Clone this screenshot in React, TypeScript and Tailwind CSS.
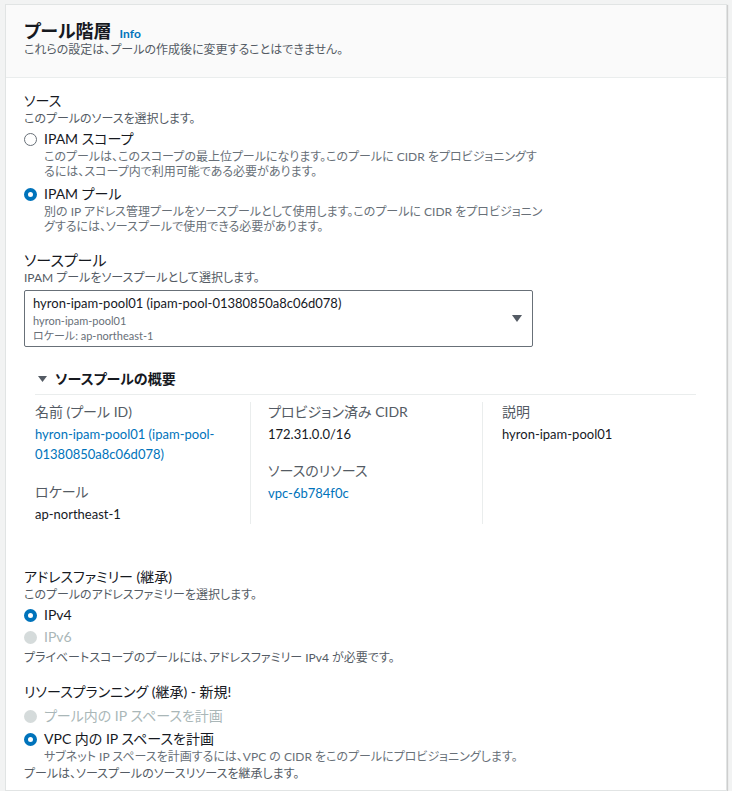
import React from 'react'

const font = { fontFamily: 'Lato, "Noto Sans CJK JP", sans-serif' }

function Radio({ state }: { state: 'on' | 'off' | 'disabled' }) {
  if (state === 'on') {
    return <span className="inline-block w-[13px] h-[13px] rounded-full border-[4px] border-[#0073bb] bg-white shrink-0" />
  }
  if (state === 'disabled') {
    return <span className="inline-block w-[13px] h-[13px] rounded-full bg-[#d5dbdb] shrink-0" />
  }
  return <span className="inline-block w-[13px] h-[13px] rounded-full border-[1.5px] border-[#687078] bg-white shrink-0" />
}

function RadioRow({ state, label }: { state: 'on' | 'off' | 'disabled'; label: string }) {
  return (
    <div className="flex items-center gap-[7px] h-[20px]">
      <Radio state={state} />
      <span className={`text-[14px] leading-[20px] ${state === 'disabled' ? 'text-[#aab7b8]' : 'text-[#16191f]'}`}>{label}</span>
    </div>
  )
}

export default function App() {
  return (
    <div className="h-screen overflow-hidden bg-[#f2f3f3] pl-[5px] pr-[5px] pt-[4px] [font-feature-settings:'palt']" style={font}>
      <div className="bg-white border border-[#e1e4e4] shadow-[1px_1px_1px_rgba(0,0,0,0.15)] h-full">
        {/* Header */}
        <div className="bg-[#fafafa] border-b border-[#eaeded] pl-[18px] pt-[15px] pb-[19px]">
          <div className="flex items-baseline gap-[8px] h-[22px]">
            <h2 className="text-[18px] leading-[22px] font-bold text-[#16191f]">プール階層</h2>
            <span className="text-[12px] font-bold text-[#0073bb]">Info</span>
          </div>
          <p className="text-[12px] leading-[16px] text-[#545b64]">これらの設定は、プールの作成後に変更することはできません。</p>
        </div>

        {/* Body */}
        <div className="pl-[18px] pt-[13px]">
          {/* Source */}
          <div className="text-[14px] leading-[20px] text-[#16191f]">ソース</div>
          <div className="text-[12px] leading-[16px] text-[#545b64]">このプールのソースを選択します。</div>
          <div className="mt-[2px]">
            <RadioRow state="off" label="IPAM スコープ" />
            <p className="ml-[20px] w-[520px] text-[12px] leading-[15px] text-[#687078]">
              このプールは、このスコープの最上位プールになります。このプールに CIDR をプロビジョニングす
              <br />
              るには、スコープ内で利用可能である必要があります。
            </p>
          </div>
          <div className="mt-[5px]">
            <RadioRow state="on" label="IPAM プール" />
            <p className="ml-[20px] w-[520px] text-[12px] leading-[15px] text-[#687078]">
              別の IP アドレス管理プールをソースプールとして使用します。このプールに CIDR をプロビジョニン
              <br />
              グするには、ソースプールで使用できる必要があります。
            </p>
          </div>

          {/* Source pool */}
          <div className="mt-[16px] text-[15px] leading-[20px] text-[#16191f]">ソースプール</div>
          <div className="text-[12px] leading-[16px] text-[#545b64]">IPAM プールをソースプールとして選択します。</div>
          <div className="mt-[4px] w-[509px] h-[57px] border border-[#687078] rounded-[2px] flex items-center pl-[8px] pr-[10px]">
            <div className="flex-1">
              <div className="text-[13px] leading-[19px] text-[#16191f]">hyron-ipam-pool01 (ipam-pool-01380850a8c06d078)</div>
              <div className="text-[11px] leading-[15px] text-[#687078]">hyron-ipam-pool01</div>
              <div className="text-[11px] leading-[15px] text-[#687078]">ロケール: ap-northeast-1</div>
            </div>
            <svg width="10" height="8" viewBox="0 0 10 8" className="shrink-0">
              <path d="M0 0 H10 L5 7 Z" fill="#545b64" />
            </svg>
          </div>

          {/* Summary */}
          <div className="ml-[11px] w-[661px] mt-[22px]">
            <div className="flex items-center gap-[8px] h-[20px] pl-[3px]">
              <svg width="9" height="7" viewBox="0 0 9 7">
                <path d="M0 0 H9 L4.5 6 Z" fill="#545b64" />
              </svg>
              <span className="text-[14px] leading-[20px] font-bold text-[#16191f]">ソースプールの概要</span>
            </div>
            <div className="mt-[5px] border-t border-[#eaeded] pt-[7px] flex">
              <div className="w-[216px] border-r border-[#eaeded] pr-[8px]">
                <div className="text-[14px] leading-[20px] text-[#545b64]">名前 (プール ID)</div>
                <div className="mt-[2px] text-[13px] leading-[20px] text-[#0073bb] whitespace-nowrap">
                  hyron-ipam-pool01 (ipam-pool-
                  <br />
                  01380850a8c06d078)
                </div>
                <div className="mt-[18px] text-[14px] leading-[20px] text-[#545b64]">ロケール</div>
                <div className="mt-[2px] text-[13px] leading-[20px] text-[#16191f]">ap-northeast-1</div>
              </div>
              <div className="w-[232px] border-r border-[#eaeded] pl-[17px]">
                <div className="text-[14px] leading-[20px] text-[#545b64]">プロビジョン済み CIDR</div>
                <div className="mt-[2px] text-[13px] leading-[20px] text-[#16191f]">172.31.0.0/16</div>
                <div className="mt-[17px] text-[14px] leading-[20px] text-[#545b64]">ソースのリソース</div>
                <div className="mt-[2px] text-[13px] leading-[20px] text-[#0073bb]">vpc-6b784f0c</div>
              </div>
              <div className="pl-[19px]">
                <div className="text-[14px] leading-[20px] text-[#545b64]">説明</div>
                <div className="mt-[2px] text-[13px] leading-[20px] text-[#16191f]">hyron-ipam-pool01</div>
              </div>
            </div>
          </div>

          {/* Address family */}
          <div className="mt-[43px] text-[14px] leading-[20px] text-[#16191f]">アドレスファミリー (継承)</div>
          <div className="text-[12px] leading-[16px] text-[#545b64]">このプールのアドレスファミリーを選択します。</div>
          <div className="mt-[2px]">
            <RadioRow state="on" label="IPv4" />
          </div>
          <div className="mt-[2px]">
            <RadioRow state="disabled" label="IPv6" />
          </div>
          <div className="mt-[3px] text-[12px] leading-[16px] text-[#545b64]">プライベートスコープのプールには、アドレスファミリー IPv4 が必要です。</div>

          {/* Resource planning */}
          <div className="mt-[16px] text-[14px] leading-[20px] text-[#16191f]">リソースプランニング (継承) - 新規!</div>
          <div className="mt-[4px]">
            <RadioRow state="disabled" label="プール内の IP スペースを計画" />
          </div>
          <div className="mt-[3px]">
            <RadioRow state="on" label="VPC 内の IP スペースを計画" />
            <p className="ml-[20px] text-[12px] leading-[16px] text-[#687078]">
              サブネット IP スペースを計画するには、VPC の CIDR をこのプールにプロビジョニングします。
            </p>
          </div>
          <div className="mt-[1px] text-[12px] leading-[16px] text-[#545b64]">プールは、ソースプールのソースリソースを継承します。</div>
        </div>
      </div>
    </div>
  )
}
